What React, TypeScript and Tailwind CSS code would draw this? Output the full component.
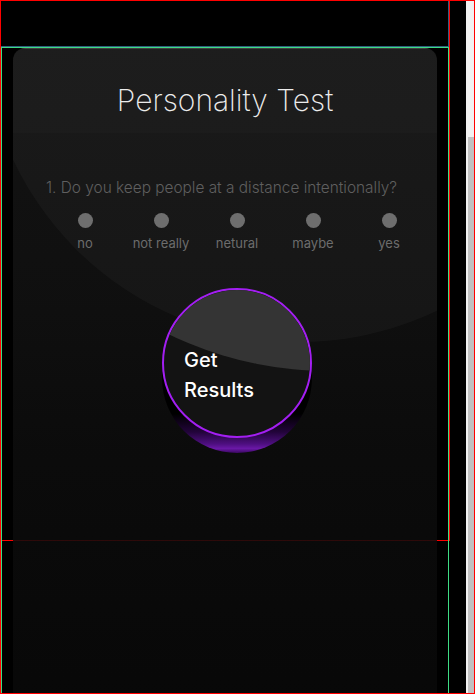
export default function App() {
  const options = ["no", "not really", "netural", "maybe", "yes"];
  return (
    <div className="flex h-[694px] w-[475px] overflow-hidden border border-[#ff0000] bg-black font-['Inter','Noto_Sans',sans-serif]">
      <div className="h-full w-[465px] overflow-hidden">
        <div className="h-[540px] w-[449px] border-b border-r border-[#ff0000]">
          <header className="h-[46px] w-[448px] border-b border-r border-[#2f5f7f]" />
          <main className="w-[448px] border-x border-t border-[#3ddc84] px-[11px]">
            <div className="relative h-[650px] overflow-hidden rounded-t-[12px] bg-[linear-gradient(180deg,rgba(22,22,22,0.86)_0%,rgba(18,18,18,0.86)_38%,rgba(13,13,13,0.86)_62%,rgba(9,9,9,0.86)_100%)]">
              <div className="absolute left-[-30px] top-[-340px] h-[634px] w-[634px] rounded-full bg-white/[0.03]" />
              <div className="absolute inset-x-[6px] top-0 h-px bg-white/15" />
              <div className="relative flex h-[85px] justify-center bg-white/[0.015] pt-[36px]">
                <h1 className="text-[30px] font-extralight leading-[32px] text-[#ececec]">
                  Personality Test
                </h1>
              </div>
              <div className="relative ml-[34px] w-[380px] pt-[45px]">
                <p className="-ml-px text-[15.4px] font-light leading-[20px] text-[#5f5f5f]">
                  1. Do you keep people at a distance intentionally?
                </p>
                <div className="mt-[15px] grid grid-cols-5">
                  {options.map((o) => (
                    <div key={o} className="flex flex-col items-center">
                      <span className="h-[15px] w-[15px] rounded-full bg-[#6e6e6e]" />
                      <span className="mt-[6px] text-[13px] leading-[18px] text-[#6c6c6c]">
                        {o}
                      </span>
                    </div>
                  ))}
                </div>
                <div className="relative mx-auto mt-[36px] h-[150px] w-[150px]">
                  <div className="absolute left-0 top-[15px] h-[150px] w-[150px] rounded-full bg-[linear-gradient(180deg,#000_0%,#000_74%,#22043a_86%,#4e0f80_94%,#6a18a6_97%,#3a0860_100%)]" />
                  <button className="relative h-full w-full overflow-hidden rounded-full border-2 border-[#a31ff2] bg-[#131313] text-left">
                    <span className="absolute left-[-203px] top-[-655px] h-[736px] w-[736px] rounded-full bg-[#343434]" />
                    <span className="relative block h-full w-[110px] pl-[20px] pt-[55px] text-[20px] font-medium leading-[30px] text-white">
                      Get Results
                    </span>
                  </button>
                </div>
              </div>
            </div>
          </main>
        </div>
      </div>
      <div className="flex h-full w-[8px] flex-col bg-[#f1f1f1]">
        <div className="h-[136px]" />
        <div className="ml-[2px] flex-1 bg-[#c1c1c1]" />
      </div>
    </div>
  );
}
